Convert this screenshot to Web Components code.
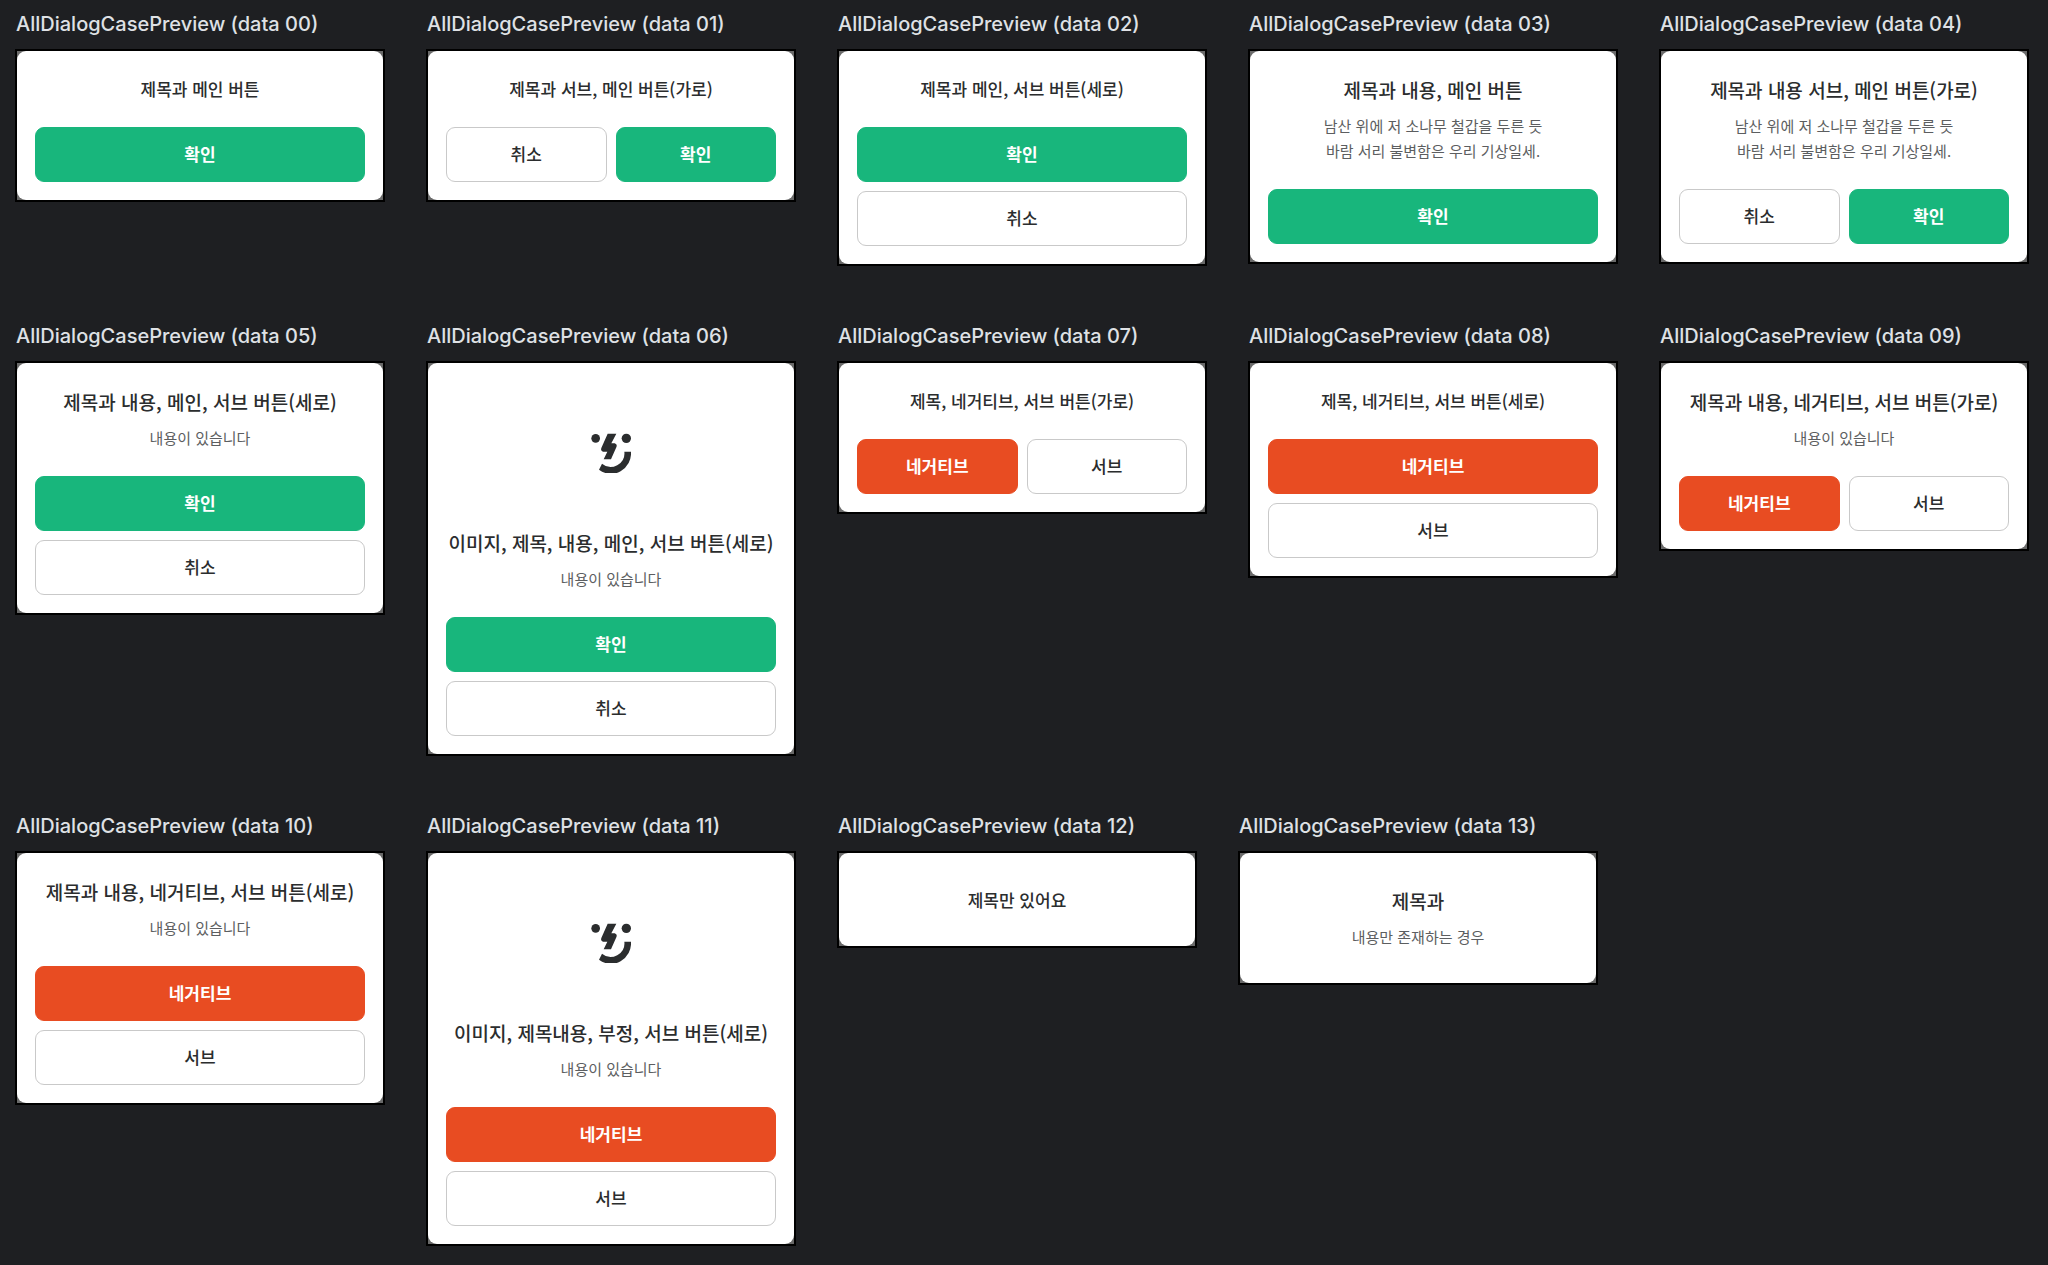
<!DOCTYPE html>
<html lang="ko">
<head>
<meta charset="utf-8">
<title>AllDialogCasePreview</title>
<style>
  body {
    margin: 0;
    background: #1e1f22;
    font-family: Inter, "Noto Sans CJK KR", sans-serif;
  }
</style>
</head>
<body>
<preview-gallery></preview-gallery>

<script>
(function () {
  'use strict';

  const CASES = [
    { title: '제목과 메인 버튼', buttons: [['main', '확인']] },
    { title: '제목과 서브, 메인 버튼(가로)', dir: 'row', buttons: [['sub', '취소'], ['main', '확인']] },
    { title: '제목과 메인, 서브 버튼(세로)', buttons: [['main', '확인'], ['sub', '취소']] },
    { title: '제목과 내용, 메인 버튼', content: '남산 위에 저 소나무 철갑을 두른 듯<br>바람 서리 불변함은 우리 기상일세.', buttons: [['main', '확인']] },
    { title: '제목과 내용 서브, 메인 버튼(가로)', content: '남산 위에 저 소나무 철갑을 두른 듯<br>바람 서리 불변함은 우리 기상일세.', dir: 'row', buttons: [['sub', '취소'], ['main', '확인']] },
    { title: '제목과 내용, 메인, 서브 버튼(세로)', content: '내용이 있습니다', buttons: [['main', '확인'], ['sub', '취소']] },
    { image: true, title: '이미지, 제목, 내용, 메인, 서브 버튼(세로)', content: '내용이 있습니다', buttons: [['main', '확인'], ['sub', '취소']] },
    { title: '제목, 네거티브, 서브 버튼(가로)', dir: 'row', buttons: [['negative', '네거티브'], ['sub', '서브']] },
    { title: '제목, 네거티브, 서브 버튼(세로)', buttons: [['negative', '네거티브'], ['sub', '서브']] },
    { title: '제목과 내용, 네거티브, 서브 버튼(가로)', content: '내용이 있습니다', dir: 'row', buttons: [['negative', '네거티브'], ['sub', '서브']] },
    { title: '제목과 내용, 네거티브, 서브 버튼(세로)', content: '내용이 있습니다', buttons: [['negative', '네거티브'], ['sub', '서브']] },
    { image: true, title: '이미지, 제목내용, 부정, 서브 버튼(세로)', content: '내용이 있습니다', buttons: [['negative', '네거티브'], ['sub', '서브']] },
    { title: '제목만 있어요', buttons: [] },
    { title: '제목과', content: '내용만 존재하는 경우', buttons: [] },
  ];

  function pad(n) { return String(n).padStart(2, '0'); }

  class FaceLogo extends HTMLElement {
    constructor() {
      super();
      this.attachShadow({ mode: 'open' }).innerHTML = `
        <style>
          :host { display: block; width: 40px; height: 40px; color: #2b2d2e; }
          svg { display: block; width: 100%; height: 100%; }
        </style>
        <svg viewBox="62 70 120 120" fill="currentColor" aria-hidden="true">
          <circle cx="76" cy="86" r="13"/>
          <circle cx="168" cy="86" r="14"/>
          <path d="M112 72h26l-15 29h10q9 3 5 12l-16 36h-22l11-23H98q-8-3-5-11z"/>
          <path d="M182 126A60 62 0 0 1 86 180L95 162A41 41 0 0 0 162 126z"/>
        </svg>
      `;
    }
  }

  class DialogButton extends HTMLElement {
    constructor() {
      super();
      this.attachShadow({ mode: 'open' }).innerHTML = `
        <style>
          :host { display: block; flex: 1 1 0; }
          button {
            display: block;
            box-sizing: border-box;
            width: 100%;
            height: 55px;
            padding: 0 0 2px;
            border: 1px solid #c9c9c9;
            border-radius: 9px;
            background: #fff;
            color: #2b2d2e;
            font: 500 17px/24px "Noto Sans CJK KR", sans-serif;
          }
          :host([variant="main"]) button { background: #18b67c; border-color: #18b67c; color: #fff; font-weight: 700; }
          :host([variant="negative"]) button { background: #e84c22; border-color: #e84c22; color: #fff; font-weight: 700; }
        </style>
        <button type="button"><slot></slot></button>
      `;
    }
  }

  class AppDialog extends HTMLElement {
    constructor() {
      super();
      this.attachShadow({ mode: 'open' }).innerHTML = `
        <style>
          :host {
            display: block;
            box-sizing: border-box;
            width: 366px;
            border-radius: 9px;
            background: #fff;
            color: #2b2d2e;
            font-family: "Noto Sans CJK KR", sans-serif;
            text-align: center;
          }
          :host([plain]) { width: 356px; }
          .texts { display: flex; flex-direction: column; align-items: center; padding: 25px 8px 26px; }
          :host([plain]) .texts { padding: 34px 8px; }
          .actions { display: flex; flex-direction: column; gap: 9px; padding: 0 18px 18px; }
          :host([dir-row]) .actions { flex-direction: row; }
          :host([plain]) .actions { display: none; }
          ::slotted([slot="image"]) { margin: 45px 0 56px; }
          ::slotted([slot="title"]) { margin: 0; font-size: 17px; line-height: 25px; font-weight: 500; }
          :host([has-content]) ::slotted([slot="title"]) { font-size: 19px; line-height: 27px; }
          ::slotted([slot="content"]) { margin: 10px 0 0; font-size: 15px; line-height: 25px; color: #5c5e60; }
        </style>
        <div class="texts">
          <slot name="image"></slot>
          <slot name="title"></slot>
          <slot name="content"></slot>
        </div>
        <div class="actions"><slot></slot></div>
      `;
    }
  }

  class PreviewFrame extends HTMLElement {
    constructor() {
      super();
      this.attachShadow({ mode: 'open' });
    }

    connectedCallback() {
      this.shadowRoot.innerHTML = `
        <style>
          :host { display: block; }
          .label { margin: 0 0 13px 1px; color: #dfe1e5; font-size: 20px; line-height: 24px; font-weight: 500; }
          .frame { border: 2px solid #000; background: #6a6a6a; }
        </style>
        <div class="label">${this.getAttribute('label')}</div>
        <div class="frame"><slot></slot></div>
      `;
    }
  }

  class PreviewGallery extends HTMLElement {
    constructor() {
      super();
      this.attachShadow({ mode: 'open' });
    }

    connectedCallback() {
      this.shadowRoot.innerHTML = `
        <style>
          :host {
            display: flex;
            flex-wrap: wrap;
            align-items: flex-start;
            gap: 58px 41px;
            padding: 12px 15px 20px;
          }
        </style>
        ${CASES.map((c, i) => this._case(c, i)).join('')}
      `;
    }

    _case(c, i) {
      const attrs = [
        c.dir === 'row' ? 'dir-row' : '',
        c.content ? 'has-content' : '',
        c.buttons.length ? '' : 'plain',
      ].join(' ');
      return `
        <preview-frame label="AllDialogCasePreview (data ${pad(i)})">
          <app-dialog ${attrs}>
            ${c.image ? '<face-logo slot="image"></face-logo>' : ''}
            <h2 slot="title">${c.title}</h2>
            ${c.content ? `<p slot="content">${c.content}</p>` : ''}
            ${c.buttons.map(([v, text]) => `<dialog-button variant="${v}">${text}</dialog-button>`).join('')}
          </app-dialog>
        </preview-frame>
      `;
    }
  }

  customElements.define('face-logo', FaceLogo);
  customElements.define('dialog-button', DialogButton);
  customElements.define('app-dialog', AppDialog);
  customElements.define('preview-frame', PreviewFrame);
  customElements.define('preview-gallery', PreviewGallery);
})();
</script>
</body>
</html>
